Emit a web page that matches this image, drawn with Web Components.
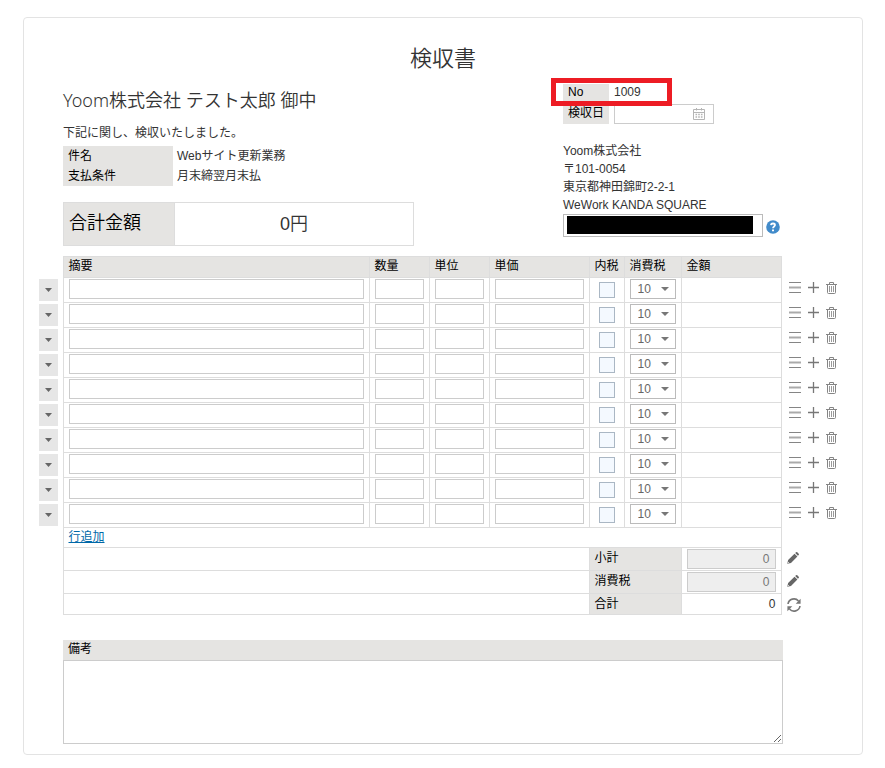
<!DOCTYPE html>
<html lang="ja">
<head>
<meta charset="utf-8">
<title>検収書</title>
<style>
body{margin:17px 22px 13px 23px;background:#fff;color:#333;font:12px/16px "Liberation Sans","Noto Sans CJK JP",sans-serif}
</style>
</head>
<body>
<inspection-sheet>
  <doc-party slot="party"></doc-party>
  <doc-issuer slot="issuer"></doc-issuer>
  <line-items slot="items" rows="10"></line-items>
  <doc-memo slot="memo"></doc-memo>
</inspection-sheet>
<script>
const define = (name, html, setup) => customElements.define(name, class extends HTMLElement {
  constructor() {
    super();
    this.attachShadow({mode: 'open'});
  }
  connectedCallback() {
    const t = document.createElement('template');
    t.innerHTML = '<style>*{box-sizing:border-box}</style>' + html;
    this.shadowRoot.replaceChildren(t.content.cloneNode(true));
    if (setup) setup(this.shadowRoot, this);
  }
});

const shapes = {
  menu: [12, 11, '<path d="M0 .5h12M0 10.5h12" stroke="#858585"/><path d="M0 5.5h12" stroke="#aaa" stroke-width="2"/>'],
  plus: [11, 11, '<path d="M5.5 0v11M0 5.5h11" stroke="#777" stroke-width="1.3"/>'],
  trash: [11, 12, '<path d="M0 2.5h11" stroke="#858585"/><path d="M3.5 2V.5h4V2M1.5 3v7.5q0 1 1 1h6q1 0 1-1V3" fill="none" stroke="#858585"/><path d="M3.5 4v6M5.5 4v6M7.5 4v6" stroke="#999"/>'],
  pencil: [12, 12, '<path d="M.3 11.7 1.1 8 7.5 1.7l2.9 2.9L4 11zM8.2 1 9 .3q.7-.6 1.3 0l1.4 1.4q.6.6 0 1.3l-.8.8z" fill="#666"/><path d="M1.2 10.2l.7.7" stroke="#fff"/>'],
  refresh: [14, 14, '<path d="M1 6A6 6 0 0 1 11.5 3M13 8A6 6 0 0 1 2.5 11" fill="none" stroke="#777" stroke-width="1.6"/><path d="M13.6.8v5H8.7zM.4 13.2v-5h4.9z" fill="#777"/>'],
  calendar: [12, 12, '<path d="M.5 1.5h11v10H.5zM.5 4.5h11M3.5 0v2.5M8.5 0v2.5" fill="none" stroke="#b5b5b5"/><path d="M2.5 6.5h7M2.5 9h7" stroke="#b5b5b5" stroke-width="1.5" stroke-dasharray="1.6 1.1"/>'],
  help: [14, 14, '<circle cx="7" cy="7" r="6.8" fill="#428bca"/><path d="M4.9 5.2Q5.1 3.5 7 3.5t2 1.6c0 1.4-2 1.4-2 3.1" fill="none" stroke="#fff" stroke-width="1.8"/><path d="M6 9.4h2v1.9H6z" fill="#fff"/>'],
  caret: [8, 4, '<path d="M0 0h8L4 4z" fill="#777"/>'],
  smallcaret: [7, 4, '<path d="M0 0h7L3.5 4z" fill="#666"/>']
};
define('ui-icon', '<style>:host{display:inline-flex}svg{display:block}</style><svg aria-hidden="true"></svg>', (root, el) => {
  const [w, h, body] = shapes[el.getAttribute('name')];
  const svg = root.querySelector('svg');
  svg.setAttribute('width', w);
  svg.setAttribute('height', h);
  svg.setAttribute('viewBox', `0 0 ${w} ${h}`);
  svg.innerHTML = body;
});

define('tax-select', `<style>
:host{display:grid;align-items:center}
select,ui-icon{grid-area:1/1}
select{appearance:none;width:100%;height:20px;margin:0;padding:0 7px;border:1px solid #bbb;border-radius:0;background:#fff;color:#666;font:12px/18px "Liberation Sans",sans-serif}
ui-icon{justify-self:end;margin-right:7px;pointer-events:none}
</style><select aria-label="消費税"><option>10</option><option>8</option><option>0</option></select><ui-icon name="caret"></ui-icon>`);

define('row-actions', `<style>
:host{display:flex;gap:7px;align-items:center;height:20px}
button{border:0;padding:0;background:none;display:flex}
</style><button aria-label="並べ替え"><ui-icon name="menu"></ui-icon></button><button aria-label="追加"><ui-icon name="plus"></ui-icon></button><button aria-label="削除"><ui-icon name="trash"></ui-icon></button>`);

define('doc-party', `<style>
:host{display:block}
h2{margin:0 0 6px;font:350 18px/32px "Noto Sans","Noto Sans CJK JP",sans-serif}
p{margin:0 0 2px;line-height:22px}
dl{margin:0 0 16px;display:grid;grid-template-columns:110px 1fr;line-height:20px}
dt{background:#e5e4e2;color:#000;padding-left:5px}
dd{margin:0;padding-left:4px}
.total{display:grid;grid-template-columns:110px 1fr;max-width:351px;border:1px solid #ddd;font-size:18px;font-weight:350;line-height:42px;margin:0}
.total dt{line-height:40px}
.total dd{padding:0;text-align:center;border-left:1px solid #ddd}
</style>
<h2>Yoom株式会社 テスト太郎 御中</h2>
<p>下記に関し、検収いたしました。</p>
<dl><dt>件名</dt><dd>Webサイト更新業務</dd><dt>支払条件</dt><dd>月末締翌月末払</dd></dl>
<dl class="total"><dt>合計金額</dt><dd>0円</dd></dl>`);

define('doc-issuer', `<style>
:host{display:block;line-height:20px}
.meta{position:relative;display:grid;grid-template-columns:46px 100px;column-gap:5px;margin-bottom:18px}
.key{background:#e5e4e2;color:#000;padding-left:5px;height:20px;line-height:18px}
.no,.meta span.key{line-height:16px}
.mark{position:absolute;left:-12px;top:-6px;width:121px;height:28px;border:5px solid #ed1c24;pointer-events:none}
.date{display:grid;align-items:center}
.date input,.date ui-icon{grid-area:1/1}
input{border:1px solid #ccc;border-radius:0;background:#fff;margin:0;padding:0;width:100%}
.date input{height:20px}
.date ui-icon{justify-self:end;margin-right:9px}
address{font-style:normal;line-height:18px}
.contact{display:flex;align-items:center;gap:3px}
.contact input{width:200px;height:23px;border-color:#bbb;padding:1px 9px 2px 3px;background:#000 content-box}
button{border:0;padding:3px 0 0;background:none;display:flex}
</style>
<div class="meta">
<span class="key">No</span><span class="no">1009</span>
<label class="key" for="date">検収日</label><span class="date"><input id="date"><ui-icon name="calendar"></ui-icon></span>
<span class="mark"></span></div>
<address>Yoom株式会社<br>〒101-0054<br>東京都神田錦町2-2-1<br>WeWork KANDA SQUARE</address>
<div class="contact"><input aria-label="担当者"><button aria-label="ヘルプ"><ui-icon name="help"></ui-icon></button></div>`);

define('line-items', `<style>
:host{display:block}
table{width:100%;table-layout:fixed;border-collapse:collapse}
td,th{border:1px solid #ddd;padding:1px 5px 3px;height:25px;text-align:left;vertical-align:top;font-weight:400}
th{background:#e5e4e2;color:#000}
thead th,thead td{height:21px;padding:1px 5px 3px;line-height:16px}
.side{border:0;background:none;padding:0}
.handle{display:flex;align-items:center;justify-content:center;width:19px;height:22px;margin-top:1px;padding:0;border:0;background:#e6e6e6}
input{display:block;margin:0;border:1px solid #ccc;border-radius:0;background:#fff;width:100%;height:20px;padding:0 5px;font:12px/18px "Liberation Sans",sans-serif;color:#777}
.check{padding:4px 9px 3px}
input[type=checkbox]{appearance:none;width:16px;height:16px;border-color:#aab7c4;background:#f4f9ff;padding:0}
.side.act{padding-left:7px}
.add td{height:20px;padding-top:0;padding-bottom:1px;line-height:18px}
a{color:#0068a8}
.sum td,.sum th{height:23px;padding-bottom:1px;line-height:18px}
.sum:last-child td,.sum:last-child th{height:21px}
.sum td.side{padding:4px 0 0 5px}
.sum:last-child td.side{padding-bottom:0}
.sum input{text-align:right;background:#eee}
.sum td.grand{text-align:right}
.side button{border:0;padding:0;display:flex}
.side button:not(.handle){background:none}
</style>
<table>
<colgroup><col style="width:24px"><col><col style="width:60px"><col style="width:60px"><col style="width:100px"><col style="width:35px"><col style="width:57px"><col style="width:100px"><col style="width:58px"></colgroup>
<thead><tr><td class="side"></td><th>摘要</th><th>数量</th><th>単位</th><th>単価</th><th>内税</th><th>消費税</th><th>金額</th><td class="side"></td></tr></thead>
<tbody id="rows"></tbody>
<tbody>
<tr class="add"><td class="side"></td><td colspan="7"><a href="#">行追加</a></td><td class="side"></td></tr>
<tr class="sum"><td class="side"></td><td colspan="4"></td><th colspan="2"><label for="sub">小計</label></th><td><input id="sub" value="0" readonly></td><td class="side"><button aria-label="小計を編集"><ui-icon name="pencil"></ui-icon></button></td></tr>
<tr class="sum"><td class="side"></td><td colspan="4"></td><th colspan="2"><label for="tax">消費税</label></th><td><input id="tax" value="0" readonly></td><td class="side"><button aria-label="消費税を編集"><ui-icon name="pencil"></ui-icon></button></td></tr>
<tr class="sum"><td class="side"></td><td colspan="4"></td><th colspan="2">合計</th><td class="grand">0</td><td class="side"><button aria-label="再計算"><ui-icon name="refresh"></ui-icon></button></td></tr>
</tbody></table>`, (root, el) => {
  const row = `<tr><td class="side"><button class="handle" aria-label="行メニュー"><ui-icon name="smallcaret"></ui-icon></button></td>
<td><input aria-label="摘要"></td><td><input aria-label="数量"></td><td><input aria-label="単位"></td><td><input aria-label="単価"></td>
<td class="check"><input type="checkbox" aria-label="内税"></td><td><tax-select></tax-select></td><td></td>
<td class="side act"><row-actions></row-actions></td></tr>`;
  root.getElementById('rows').innerHTML = row.repeat(+el.getAttribute('rows'));
});

define('doc-memo', `<style>
:host{display:block}
label{display:block;background:#e5e4e2;color:#000;padding-left:5px;line-height:18px;height:20px}
textarea{display:block;width:100%;height:84px;margin:0;border:1px solid #ccc;border-radius:0;resize:vertical;font:inherit}
</style><label for="memo">備考</label><textarea id="memo"></textarea>`);

define('inspection-sheet', `<style>
:host{display:block;border:1px solid #e3e3e3;border-radius:4px;padding:22px 0 10px}
h1{margin:0 0 12px;text-align:center;font:350 22px/32px "Noto Sans CJK JP",sans-serif}
.top{display:flex;margin:0 79px 10px 39px}
.left{flex:1;min-width:0}
.right{flex:none;width:220px}
.items{margin:0 23px 25px 15px}
.memo{margin:0 79px 0 39px}
</style>
<h1>検収書</h1>
<div class="top"><div class="left"><slot name="party"></slot></div><div class="right"><slot name="issuer"></slot></div></div>
<div class="items"><slot name="items"></slot></div>
<div class="memo"><slot name="memo"></slot></div>`);
</script>
</body>
</html>
